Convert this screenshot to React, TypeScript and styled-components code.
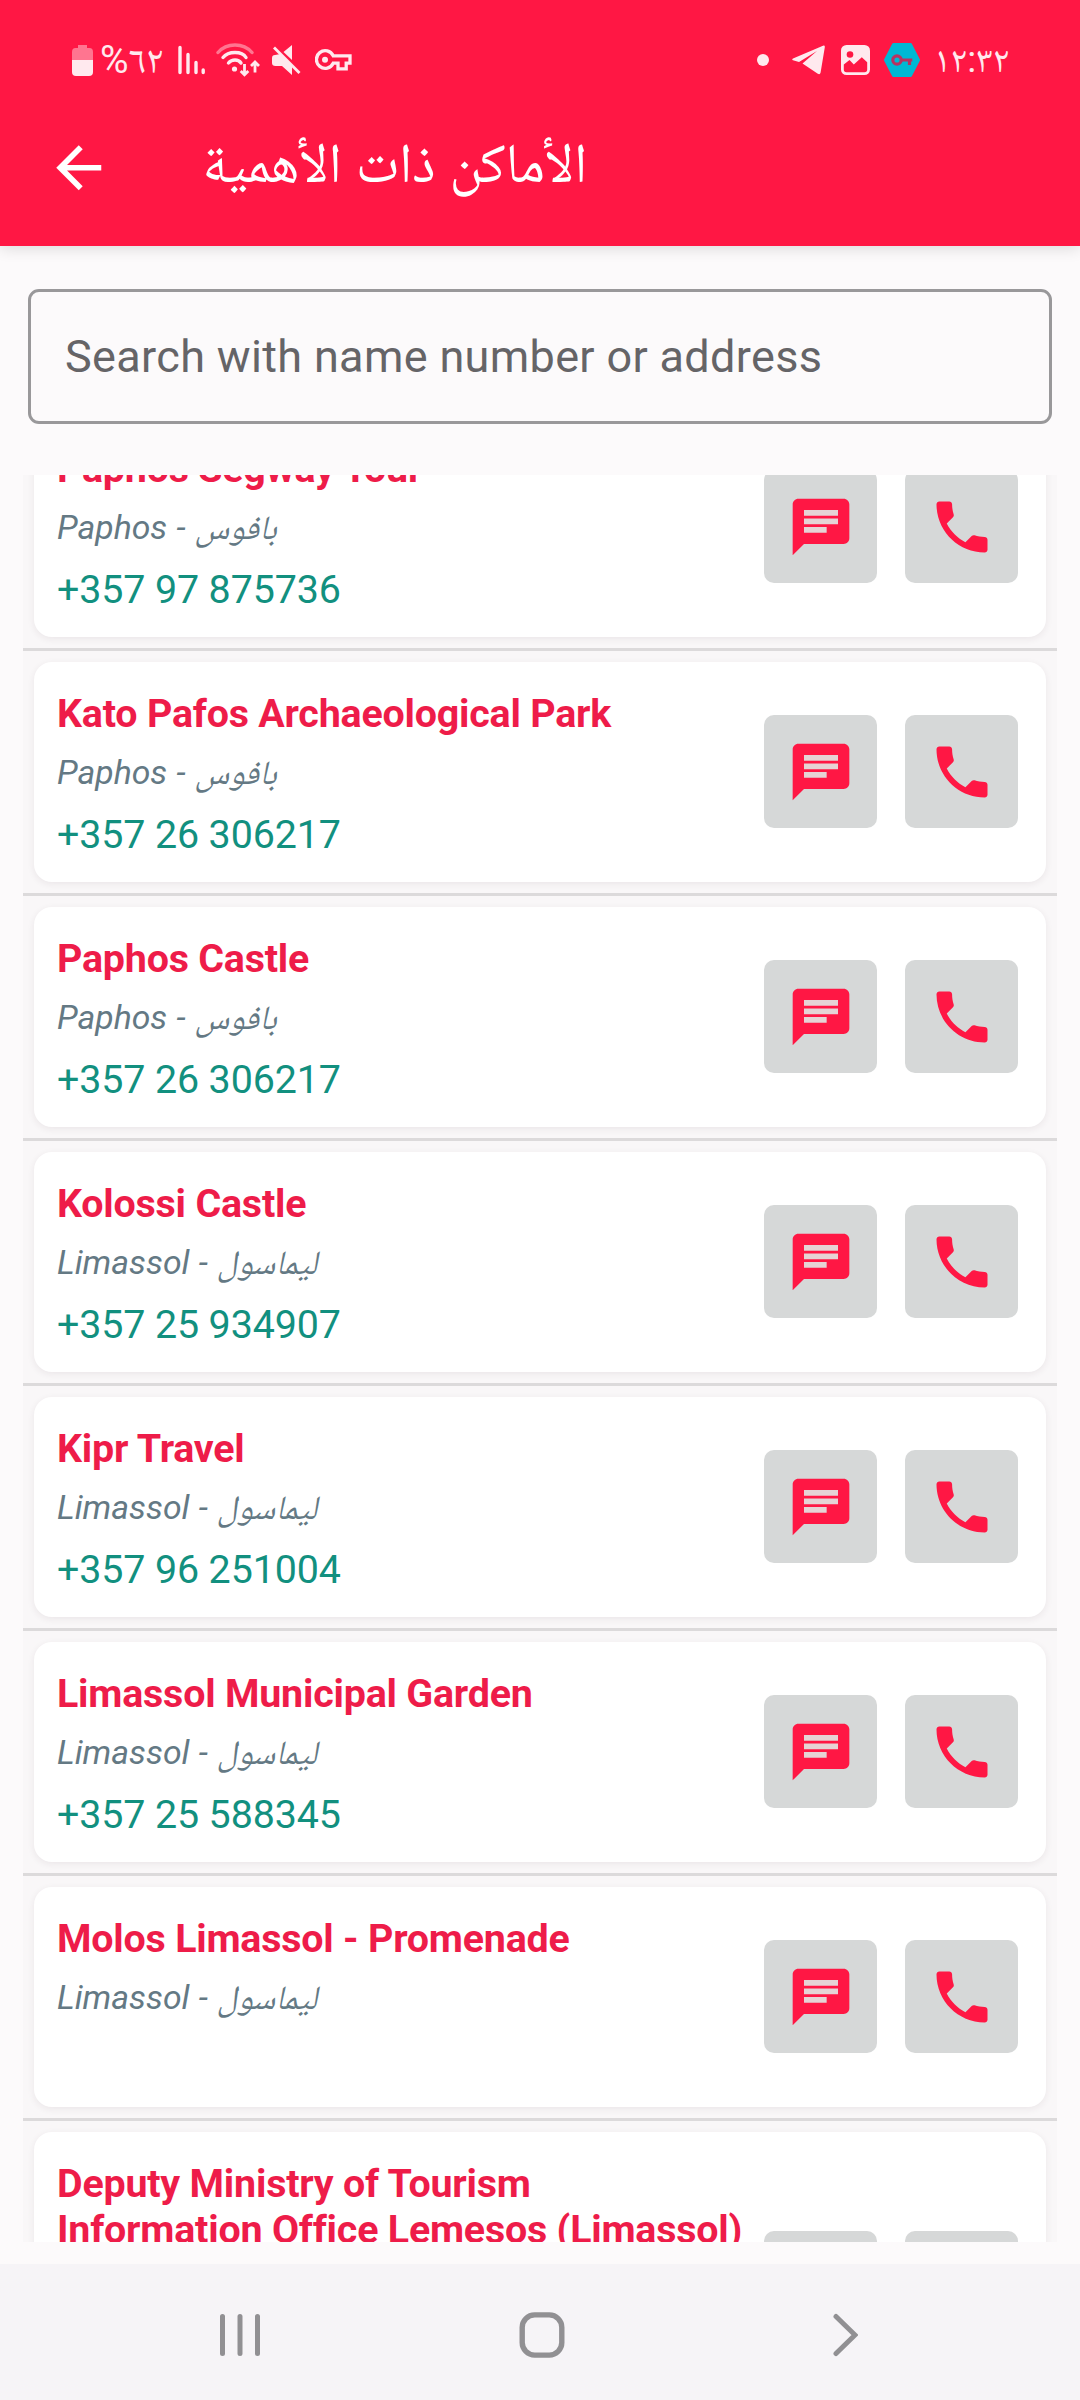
import React from "react";
import styled, { createGlobalStyle } from "styled-components";

const GlobalStyle = createGlobalStyle`
  * { box-sizing: border-box; }
  body { margin: 0; background: #fcfafb; }
  svg { display: block; flex: none; }
`;

const latin = `Roboto, "Noto Naskh Arabic", "DejaVu Sans", sans-serif`;

const Screen = styled.div`
  width: 1080px;
  height: 2400px;
  display: flex;
  flex-direction: column;
  overflow: hidden;
  background: #fcfafb;
  font-family: ${latin};
`;

const Header = styled.header`
  flex: none;
  height: 246px;
  background: #ff1744;
  box-shadow: 0 3px 14px rgba(0, 0, 0, 0.12);
`;

const StatusBar = styled.div`
  height: 120px;
  padding: 0 73px 0 72px;
  display: flex;
  align-items: center;
  justify-content: space-between;
  color: #ffe9ee;
`;

const StatusGroup = styled.div`
  display: flex;
  align-items: center;
`;

const Slot = styled.div<{ $w: number; $before?: number }>`
  width: ${(p) => p.$w}px;
  margin-left: ${(p) => p.$before ?? 0}px;
  display: flex;
  align-items: center;
`;

const StatusText = styled.span<{ $size?: number }>`
  font-size: ${(p) => p.$size ?? 37}px;
  line-height: 40px;
  white-space: nowrap;
`;

const Dot = styled.span`
  width: 12px;
  height: 12px;
  border-radius: 50%;
  background: #ffe9ee;
`;

const Toolbar = styled.div`
  height: 126px;
  padding: 14px 45px 0;
  display: flex;
  align-items: flex-start;
`;

const PlainButton = styled.button`
  padding: 0;
  border: 0;
  background: none;
  cursor: pointer;
`;

const Title = styled.h1`
  margin: 0 0 0 90px;
  font: 400 56px/58px ${latin};
  color: #fff;
  white-space: nowrap;
`;

const SearchBox = styled.label`
  flex: none;
  height: 135px;
  margin: 43px 28px 51px;
  padding: 0 34px;
  display: flex;
  align-items: center;
  border: 3px solid #99989a;
  border-radius: 11px;
`;

const SearchInput = styled.input`
  width: 100%;
  padding: 0;
  border: 0;
  outline: 0;
  background: none;
  font: 400 45px/54px ${latin};
  letter-spacing: 0.34px;
  &::placeholder { color: #656467; opacity: 1; }
`;

const ListViewport = styled.main`
  flex: none;
  height: 1767px;
  margin: 0 23px 22px;
  overflow: hidden;
  background: #f9f7f8;
`;

const List = styled.div`
  margin-top: -58px;
`;

const Item = styled.div`
  padding: 0 11px 11px;
  & + & {
    border-top: 3px solid #dcdadb;
    padding-top: 11px;
  }
`;

const Card = styled.article`
  height: 220px;
  padding: 29px 28px 0 23px;
  display: flex;
  align-items: flex-start;
  justify-content: space-between;
  border-radius: 18px;
  background: #fff;
  box-shadow: 0 2px 7px rgba(60, 40, 50, 0.08);
`;

const Details = styled.div`
  width: 686px;
  display: flex;
  flex-direction: column;
`;

const Name = styled.h2`
  margin: 0 0 16px;
  font: 700 39.4px/46px ${latin};
  letter-spacing: -0.21px;
  color: #ee1c49;
`;

const City = styled.p`
  margin: 0 0 19px;
  height: 40px;
  font: italic 400 33.75px/40px ${latin};
  word-spacing: 1px;
  color: #647984;
  white-space: nowrap;
`;

const Phone = styled.p`
  margin: 0;
  font: 400 39.4px/46px ${latin};
  letter-spacing: -0.12px;
  color: #12907f;
`;

const Actions = styled.div<{ $tall?: boolean }>`
  display: flex;
  gap: 28px;
  margin-top: ${(p) => (p.$tall ? 70 : 24)}px;
`;

const ActionButton = styled.button`
  width: 113px;
  height: 113px;
  padding: 0;
  display: grid;
  place-items: center;
  border: 0;
  border-radius: 10px;
  background: #d6d8d8;
  cursor: pointer;
`;

const NavBar = styled.nav`
  flex: 1;
  padding: 48px 220px 0;
  display: grid;
  grid-template-columns: 299px 311px 30px;
  align-items: start;
  justify-items: start;
  background: #f6f4f7;
`;

const BatteryIcon = () => (
  <svg width="21" height="32" viewBox="0 0 21 32">
    <path d="M6 1h9v3h2.500Q21 4 21 8v8H0V8Q0 4 3.500 4H6z" fill="#ff7590" />
    <path d="M0 16h21v12q0 4-4 4H4q-4 0-4-4z" fill="#ffe9ee" />
  </svg>
);

const SignalIcon = () => (
  <svg width="27" height="30" viewBox="0 0 27 30" stroke="#ffe9ee" strokeWidth="3.400" strokeLinecap="round">
    <path d="M2 2.500v25M10 9.500v18M18 17.500v10M25.200 25v2.500" />
  </svg>
);

const WifiIcon = () => (
  <svg width="44" height="34" viewBox="0 0 44 34" fill="none" strokeLinecap="round" strokeWidth="3.400">
    <path d="M2 9.500Q8.500 2 19 2T36 9.500" stroke="#ff7590" />
    <path d="M7 14.500Q11 9.500 19 9.500T30 14.500M12.500 20Q15 17 19 17T25 20" stroke="#ffe9ee" />
    <circle cx="18.500" cy="26" r="2.600" fill="#ffe9ee" />
    <path d="M28.500 21v10M24.700 28l3.800 3.800L32.300 28M39 29.500V19.500M35 23l4-4 4 4" stroke="#ffe9ee" strokeWidth="2.800" strokeLinecap="butt" />
  </svg>
);

const MuteIcon = () => (
  <svg width="29" height="30" viewBox="0 0 29 30" fill="#ffe9ee">
    <path d="M20 0v15L11.500 7zM0 13q0-3 3-3l5.500-1L20 20.500V30L10 21H3.500Q0 21 0 18z" />
    <path d="M2 2.500L27.500 28" stroke="#ffe9ee" strokeWidth="2.800" />
  </svg>
);

const VpnKeyIcon = () => (
  <svg width="37" height="22" viewBox="0 0 37 22">
    <path
      d="M18.200 6.800H35v7.400h-3.800v5.600H23v-5.600h-4.800A8.800 8.800 0 1 1 18.200 6.800z"
      fill="none"
      stroke="#ffe9ee"
      strokeWidth="3.300"
    />
    <circle cx="10" cy="10.700" r="3" fill="#ffe9ee" />
  </svg>
);

const TelegramIcon = () => (
  <svg width="33" height="30" viewBox="0 0 33 30" fill="#ffe9ee">
    <path d="M1 13.500L31 .7q2-.7 1.800 1.500L28.600 27.500q-.6 2.700-2.800 1.300L10.500 18.500 25 6 7 17 1 15.200q-1.500-.8 0-1.700z" />
  </svg>
);

const ImageIcon = () => (
  <svg width="29" height="30" viewBox="0 0 29 30">
    <rect width="29" height="30" rx="5.500" fill="#ffe9ee" />
    <circle cx="9" cy="9.500" r="3.300" fill="#ff1744" />
    <path d="M2.800 19.500L8.500 15l4.300 4.500 8-7.300 5.400 5v7.300q0 2.700-2.700 2.700h-18q-2.700 0-2.700-2.700z" fill="#ff1744" />
  </svg>
);

const HexKeyIcon = () => (
  <svg width="36" height="34" viewBox="0 0 36 34">
    <path d="M9.500 1.500h17L34.500 17l-8 15.500h-17L1.500 17z" fill="#00b8d4" stroke="#00b8d4" strokeWidth="3" strokeLinejoin="round" />
    <circle cx="13" cy="17" r="4.200" fill="none" stroke="#b83261" strokeWidth="3.200" />
    <path d="M17 17h11.300M25.500 17v5" stroke="#b83261" strokeWidth="3.200" />
  </svg>
);

const BackArrow = () => (
  <svg width="67.500" height="67.500" viewBox="0 0 24 24" fill="#fff">
    <path d="M20 11H7.830l5.590-5.590L12 4l-8 8 8 8 1.410-1.410L7.830 13H20v-2z" />
  </svg>
);

const MessageIcon = () => (
  <svg width="68" height="68" viewBox="0 0 24 24">
    <path d="M5 5h14v9H5z" fill="#e6d3d5" />
    <path
      fill="#ff1744"
      d="M20 2H4c-1.100 0-1.990.9-1.990 2L2 22l4-4h14c1.100 0 2-.9 2-2V4c0-1.100-.9-2-2-2zM6 9h12v2H6V9zm8 5H6v-2h8v2zm4-6H6V6h12v2z"
    />
  </svg>
);

const CallIcon = () => (
  <svg width="68" height="68" viewBox="0 0 24 24" fill="#ff1744">
    <path d="M20 15.500c-1.250 0-2.450-.2-3.570-.57-.35-.11-.74-.03-1.020.24l-2.200 2.200c-2.830-1.440-5.150-3.750-6.590-6.590l2.200-2.210c.28-.26.36-.65.25-1C8.700 6.450 8.500 5.250 8.500 4c0-.55-.45-1-1-1H4c-.55 0-1 .45-1 1 0 9.390 7.610 17 17 17 .55 0 1-.45 1-1v-3.500c0-.55-.45-1-1-1z" />
  </svg>
);

const RecentsIcon = () => (
  <svg width="40" height="46" viewBox="0 0 40 46" stroke="#919093" strokeWidth="5" strokeLinecap="round">
    <path d="M2.500 4.500v37M20 4.500v37M37.500 4.500v37" />
  </svg>
);

const HomeIcon = () => (
  <svg width="46" height="46" viewBox="0 0 46 46">
    <rect x="3.200" y="2.900" width="39.600" height="40.200" rx="12.500" fill="none" stroke="#919093" strokeWidth="5.400" />
  </svg>
);

const NavBackIcon = () => (
  <svg width="28" height="46" viewBox="0 0 28 46" fill="none" stroke="#919093" strokeWidth="5" strokeLinecap="round">
    <path d="M6 4.500L25 23 6 41.500" />
  </svg>
);

const paphos = { en: "Paphos", ar: "بافوس" };
const limassol = { en: "Limassol", ar: "ليماسول" };

const places = [
  { name: "Paphos Segway Tour", city: paphos, phone: "+357 97 875736" },
  { name: "Kato Pafos Archaeological Park", city: paphos, phone: "+357 26 306217" },
  { name: "Paphos Castle", city: paphos, phone: "+357 26 306217" },
  { name: "Kolossi Castle", city: limassol, phone: "+357 25 934907" },
  { name: "Kipr Travel", city: limassol, phone: "+357 96 251004" },
  { name: "Limassol Municipal Garden", city: limassol, phone: "+357 25 588345" },
  { name: "Molos Limassol - Promenade", city: limassol, phone: "" },
];

export default function App() {
  return (
    <Screen>
      <GlobalStyle />
      <Header>
        <StatusBar>
          <StatusGroup>
            <Slot $w={21}><BatteryIcon /></Slot>
            <Slot $w={62} $before={7}><StatusText $size={39}>%٦٢</StatusText></Slot>
            <Slot $w={26} $before={16}><SignalIcon /></Slot>
            <Slot $w={44} $before={12}><WifiIcon /></Slot>
            <Slot $w={28} $before={12}><MuteIcon /></Slot>
            <Slot $w={37} $before={15}><VpnKeyIcon /></Slot>
          </StatusGroup>
          <StatusGroup>
            <Slot $w={12}><Dot /></Slot>
            <Slot $w={33} $before={23}><TelegramIcon /></Slot>
            <Slot $w={28} $before={16}><ImageIcon /></Slot>
            <Slot $w={36} $before={15}><HexKeyIcon /></Slot>
            <Slot $w={73} $before={14}><StatusText>١٢:٣٢</StatusText></Slot>
          </StatusGroup>
        </StatusBar>
        <Toolbar>
          <PlainButton><BackArrow /></PlainButton>
          <Title dir="rtl">الأماكن ذات الأهمية</Title>
        </Toolbar>
      </Header>
      <SearchBox>
        <SearchInput placeholder="Search with name number or address" />
      </SearchBox>
      <ListViewport>
        <List>
          {places.map((place) => (
            <Item key={place.name}>
              <Card>
                <Details>
                  <Name>{place.name}</Name>
                  <City>{place.city.en} - {place.city.ar}</City>
                  <Phone>{place.phone}</Phone>
                </Details>
                <Actions>
                  <ActionButton><MessageIcon /></ActionButton>
                  <ActionButton><CallIcon /></ActionButton>
                </Actions>
              </Card>
            </Item>
          ))}
          <Item>
            <Card>
              <Details>
                <Name>Deputy Ministry of Tourism<br />Information Office Lemesos (Limassol)</Name>
              </Details>
              <Actions $tall>
                <ActionButton />
                <ActionButton />
              </Actions>
            </Card>
          </Item>
        </List>
      </ListViewport>
      <NavBar>
        <PlainButton><RecentsIcon /></PlainButton>
        <PlainButton><HomeIcon /></PlainButton>
        <PlainButton><NavBackIcon /></PlainButton>
      </NavBar>
    </Screen>
  );
}
